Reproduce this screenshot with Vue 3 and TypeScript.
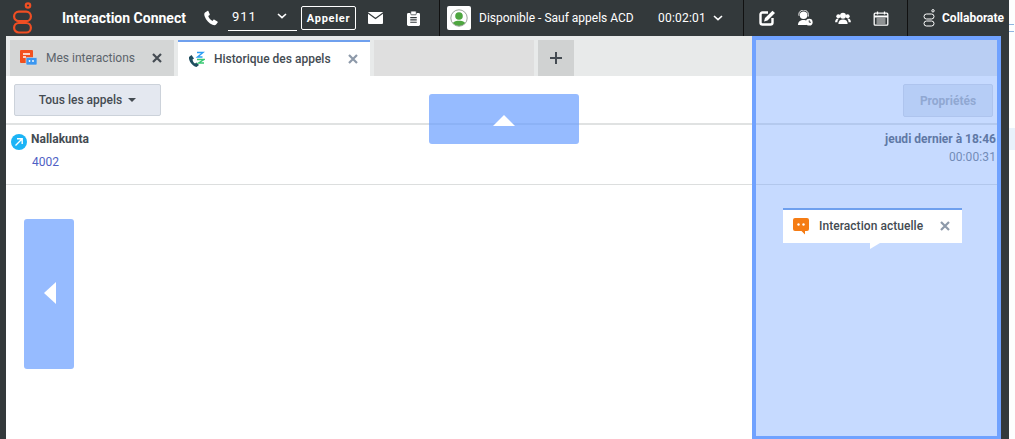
<script setup lang="ts">
const rightIcons = ['edit', 'agent', 'group', 'cal']
</script>

<template>
  <div class="page">
    <div class="shell">
      <header class="topbar">
        <svg class="logo" width="24" height="32" viewBox="0 0 24 32" fill="none" stroke="#f04e23" stroke-width="2.2">
          <circle cx="18" cy="3.500" r="2.200" />
          <rect x="4.100" y="9.600" width="16.800" height="9.500" rx="4.700" />
          <rect x="4.100" y="21" width="16.800" height="9.500" rx="4.700" />
        </svg>
        <span class="brand">Interaction Connect</span>
        <svg class="phone" width="16" height="16" viewBox="0 0 24 24" fill="#fff"><path d="M6.600 1.500 3 3.600C1.600 4.600 1.600 7 2.600 9.600c2 5.400 6.600 10.400 11.600 12.600 2.400 1 4.200.8 5.400-.4l2.400-3c.4-.6.2-1.200-.4-1.600l-4.400-2.600c-.6-.4-1.200-.2-1.600.2l-1.400 1.600c-2.600-1.200-5.400-4.400-6.400-7.400l1.800-1.200c.6-.4.8-1 .5-1.600L8.200 2c-.4-.7-1-.9-1.600-.5z"/></svg>
        <div class="dial">
          <span class="dial-num">911</span>
          <svg width="10" height="6" viewBox="0 0 10 6" fill="none" stroke="#fff" stroke-width="1.600"><path d="M1 1l4 3.600L9 1" /></svg>
        </div>
        <button class="call">Appeler</button>
        <svg class="mail" width="15" height="12" viewBox="0 0 15 12"><rect width="15" height="12" rx="1" fill="#fff"/><path d="M0 1l7.500 5.500L15 1" fill="none" stroke="#33393b" stroke-width="1.100"/></svg>
        <svg class="clip" width="13" height="15" viewBox="0 0 14 16"><rect y="2" width="14" height="14" rx="1.500" fill="#fff"/><rect x="4" y="0" width="6" height="4" rx="1" fill="#fff" stroke="#33393b" stroke-width=".8"/><path d="M3.500 7h7M3.500 9.500h7M3.500 12h7" stroke="#33393b" stroke-width="1.200"/></svg>
        <div class="sep sep-a"></div>
        <div class="status-ico">
          <svg width="24" height="24" viewBox="0 0 24 24">
            <defs><clipPath id="stc"><circle cx="12" cy="12" r="8.200"/></clipPath></defs>
            <g clip-path="url(#stc)">
              <circle cx="12" cy="10" r="3.800" fill="#4ea640"/>
              <path d="M4 22c0-5 3.500-7.200 8-7.200s8 2.200 8 7.200z" fill="#4ea640"/>
            </g>
            <circle cx="12" cy="12" r="8.200" fill="none" stroke="#9aa59a" stroke-width="1"/>
          </svg>
        </div>
        <span class="status-text">Disponible - Sauf appels ACD</span>
        <span class="timer">00:02:01</span>
        <svg class="chev2" width="10" height="6" viewBox="0 0 10 6" fill="none" stroke="#fff" stroke-width="1.600"><path d="M1 1l4 3.600L9 1" /></svg>
        <div class="sep sep-b"></div>
        <div class="tools">
          <template v-for="n in rightIcons" :key="n">
            <svg v-if="n === 'edit'" width="16" height="16" viewBox="0 0 16 16" fill="none"><path d="M9 2.500H3.500a2 2 0 0 0-2 2v8a2 2 0 0 0 2 2h8a2 2 0 0 0 2-2V8" stroke="#fff" stroke-width="2.400"/><path d="M13.500.8 16 3 8.500 10.500 5 11.500l1-3.500z" fill="#fff"/></svg>
            <svg v-else-if="n === 'agent'" width="16" height="16" viewBox="0 0 17 17"><circle cx="7" cy="5.500" r="4" fill="#fff"/><path d="M1 16c0-4 2.500-5.500 6-5.500 1.500 0 2.500.3 3.500 1V16z" fill="#fff"/><path d="M2 6V4.500a5 4.500 0 0 1 10 0V7" fill="none" stroke="#fff" stroke-width="1"/><circle cx="13" cy="13" r="3.600" fill="#fff"/><path d="M13 11v2h1.800" stroke="#33393b" stroke-width="1" fill="none"/></svg>
            <svg v-else-if="n === 'group'" width="16" height="13" viewBox="0 0 17 14" fill="#fff"><circle cx="8.500" cy="4" r="3.200"/><path d="M3.500 13c0-3.500 2-5 5-5s5 1.500 5 5z"/><circle cx="3.500" cy="4.500" r="2.200"/><circle cx="13.500" cy="4.500" r="2.200"/><path d="M0 11c0-2.500 1.200-4 3-4 .4 0 .7 0 1 .2C3 8 2.500 9.500 2.500 11zM17 11c0-2.500-1.200-4-3-4-.4 0-.7 0-1 .2 1 .8 1.500 2.300 1.500 3.800z"/></svg>
            <svg v-else width="16" height="15" viewBox="0 0 15 15" fill="none" stroke="#fff"><rect x=".7" y="2.200" width="13.600" height="12" rx="1" stroke-width="1.300"/><path d="M.7 5.500h13.600" stroke-width="2"/><path d="M4 .5v3M11 .5v3" stroke-width="1.300"/><path d="M3 8h9M3 10h9M3 12h9" stroke-width=".9"/></svg>
          </template>
        </div>
        <div class="sep"></div>
        <svg class="logo-small" width="13" height="18" viewBox="0 0 13 18" fill="none" stroke="#fff" stroke-width="1"><circle cx="10" cy="1.800" r="1.200"/><rect x="1" y="5" width="10" height="5" rx="2.500"/><rect x="1" y="12" width="10" height="5" rx="2.500"/></svg>
        <span class="collab">Collaborate</span>
      </header>

      <main class="main">
        <nav class="tabs">
          <div class="tab tab-off">
            <svg width="17" height="17" viewBox="0 0 17 17"><rect width="13" height="13" rx="1" fill="#f2511f"/><path d="M3 4h7M3 7h3" stroke="#fff" stroke-width="1.500"/><rect x="6" y="7.500" width="11" height="7.500" rx="1" fill="#3b97f0" stroke="#e0e0e0" stroke-width=".6"/><circle cx="9.500" cy="11" r=".9" fill="#fff"/><circle cx="13" cy="11" r=".9" fill="#fff"/></svg>
            <span class="tab-label">Mes interactions</span>
            <svg class="x" width="10" height="10" viewBox="0 0 10 10"><path d="M1 1l8 8M9 1L1 9" stroke="#444b52" stroke-width="2.200"/></svg>
          </div>
          <div class="tab tab-on">
            <svg width="17" height="17" viewBox="0 0 17 17"><path d="M3.500 4 1 6c-.5 3.500 3 9 7.500 10L11 14l-2.500-2.500-1.500 1C5.500 11.500 4.700 10 4.500 8.500L6 7.500z" fill="#1f4e5f"/><path d="M9 1.500h6L9.500 6h5" fill="none" stroke="#2a9df4" stroke-width="1.400"/><path d="M9 8.500h7L10.500 12H16" fill="none" stroke="#37c871" stroke-width="1.400"/></svg>
            <span class="tab-label strong">Historique des appels</span>
            <svg class="x" width="10" height="10" viewBox="0 0 10 10"><path d="M1 1l8 8M9 1L1 9" stroke="#8d99a9" stroke-width="2.200"/></svg>
          </div>
          <div class="tab-fill"></div>
          <div class="tab-add">
            <svg width="12" height="12" viewBox="0 0 12 12"><path d="M6 0v12M0 6h12" stroke="#444b52" stroke-width="2"/></svg>
          </div>
        </nav>

        <div class="toolbar">
          <button class="filter">Tous les appels<i class="caret"></i></button>
          <button class="props">Propriétés</button>
        </div>

        <div class="row">
          <div class="row-left">
            <span class="dir">
              <svg width="10" height="10" viewBox="0 0 10 10" fill="none" stroke="#fff" stroke-width="1.400"><path d="M1.500 8.500 8 2M3 1.800h5.200V7"/></svg>
            </span>
            <div class="who">
              <div class="name">Nallakunta</div>
              <div class="num">4002</div>
            </div>
          </div>
          <div class="row-right">
            <div class="when">jeudi dernier à 18:46</div>
            <div class="dur">00:00:31</div>
          </div>
        </div>
      </main>
    </div>

    <aside class="peek">
      <i class="peek-mark"></i>
      <i class="peek-band"></i>
    </aside>

    <div class="dock dock-top"><i class="tri-up"></i></div>
    <div class="dock dock-left"><i class="tri-left"></i></div>
    <div class="drop-zone">
      <div class="ghost">
        <svg width="16" height="17" viewBox="0 0 16 17"><path d="M2 0h12a2 2 0 0 1 2 2v9a2 2 0 0 1-2 2h-2v3.500L8.500 13H2a2 2 0 0 1-2-2V2a2 2 0 0 1 2-2z" fill="#f57c14"/><circle cx="5.500" cy="6.500" r="1.200" fill="#fff"/><circle cx="10.500" cy="6.500" r="1.200" fill="#fff"/></svg>
        <span class="ghost-label">Interaction actuelle</span>
        <svg class="x" width="10" height="10" viewBox="0 0 10 10"><path d="M1 1l8 8M9 1L1 9" stroke="#8d99a9" stroke-width="2.200"/></svg>
        <i class="ghost-tail"></i>
      </div>
    </div>
  </div>
</template>

<style>
html, body { margin: 0; background: #fdfdfd; overflow: hidden; }
</style>

<style scoped>
.page {
  position: relative;
  display: flex;
  width: 1015px;
  height: 439px;
  overflow: hidden;
  font-family: Roboto, "Liberation Sans", sans-serif;
  background: #fdfefe;
  color: #444b52;
}
.shell {
  width: 1009px;
  flex: none;
  background: #33393b;
  display: flex;
  flex-direction: column;
}
.peek { flex: 1; position: relative; }
.peek-mark {
  position: absolute;
  left: 0;
  top: 24px;
  width: 5px;
  height: 6px;
  border-top: 1px solid #8fb4e0;
  border-bottom: 1px solid #8fb4e0;
}
.peek-band {
  position: absolute;
  left: 0;
  right: 0;
  top: 128px;
  height: 22px;
  background: #e8f1fb;
}
.topbar {
  height: 36px;
  flex: none;
  color: #fff;
  display: flex;
  align-items: center;
  font-size: 12px;
}
.logo { margin-left: 10px; flex: none; }
.brand { margin-left: 28px; width: 141px; font-size: 14px; font-weight: 700; white-space: nowrap; }
.phone { flex: none; }
.dial {
  margin-left: 9px;
  width: 69px;
  height: 26px;
  box-sizing: border-box;
  border-bottom: 1px solid #fff;
  display: flex;
  align-items: center;
  justify-content: space-between;
  padding: 0 10px 3px 4px;
}
.dial-num { font-size: 13px; letter-spacing: 1px; }
.call {
  margin-left: 4px;
  width: 55px;
  height: 24px;
  padding: 0;
  background: transparent;
  color: #fff;
  border: 1px solid #fff;
  border-radius: 2px;
  font: 700 11px Roboto, sans-serif;
  letter-spacing: .7px;
}
.mail { margin-left: 12px; flex: none; }
.clip { margin-left: 24px; flex: none; }
.sep { width: 1px; height: 36px; background: #111; flex: none; }
.sep-a { margin-left: 19px; }
.status-ico {
  margin-left: 7px;
  width: 24px;
  height: 24px;
  border-radius: 2px;
  background: #fff;
  display: flex;
  flex: none;
}
.status-text { margin-left: 8px; width: 179px; white-space: nowrap; }
.timer { width: 55px; letter-spacing: .2px; }
.chev2 { flex: none; }
.sep-b { margin-left: 20px; }
.tools {
  display: flex;
  align-items: center;
  gap: 22px;
  width: 163px;
  box-sizing: border-box;
  padding-left: 15px;
}
.logo-small { margin-left: 15px; flex: none; }
.collab { margin-left: 6px; font-weight: 700; white-space: nowrap; }

.main {
  margin-left: 6px;
  width: 995px;
  flex: 1;
  display: flex;
  flex-direction: column;
  background: #fff;
}
.tabs {
  height: 40px;
  box-sizing: border-box;
  padding: 4px 0 0 4px;
  background: #e8eaea;
  display: flex;
  gap: 4px;
}
.tab {
  height: 36px;
  box-sizing: border-box;
  display: flex;
  align-items: center;
  font-size: 12px;
  white-space: nowrap;
}
.tab-off { width: 164px; background: #d4d6d6; padding-left: 10px; }
.tab-on { width: 192px; background: #fff; border-top: 2px solid #6fa0ee; padding-left: 10px; }
.tab-label { margin-left: 9px; flex: 1; }
.tab-off .tab-label { color: #5c646c; }
.strong { font-weight: 500; color: #444b52; }
.x { margin-right: 12px; flex: none; }
.tab-fill { width: 160px; height: 36px; background: #dfdfdf; }
.tab-add {
  width: 36px;
  height: 36px;
  background: #d0d2d2;
  display: flex;
  align-items: center;
  justify-content: center;
}

.toolbar {
  height: 49px;
  box-sizing: border-box;
  border-bottom: 2px solid #e0e2e2;
  padding: 8px 8px 0 8px;
  display: flex;
  justify-content: space-between;
  align-items: flex-start;
}
.filter {
  width: 147px;
  height: 32px;
  box-sizing: border-box;
  padding: 0;
  background: #e4e8f0;
  border: 1px solid #ccd2da;
  border-radius: 2px;
  font: 500 12px Roboto, sans-serif;
  color: #444b52;
}
.caret {
  display: inline-block;
  margin-left: 6px;
  vertical-align: 2px;
  border-left: 4px solid transparent;
  border-right: 4px solid transparent;
  border-top: 4px solid #444b52;
}
.props {
  width: 90px;
  height: 33px;
  box-sizing: border-box;
  padding: 0;
  background: #e4e8f0;
  border: 1px solid #d6dae2;
  border-radius: 2px;
  font: 700 12px Roboto, sans-serif;
  color: #a3a9b1;
}
.row {
  height: 60px;
  box-sizing: border-box;
  border-bottom: 1px solid #dcdede;
  display: flex;
  justify-content: space-between;
}
.row-left { display: flex; padding: 8px 0 0 5px; }
.dir {
  width: 16px;
  height: 16px;
  margin-top: 1px;
  border-radius: 50%;
  background: #1cb4f6;
  display: flex;
  align-items: center;
  justify-content: center;
  flex: none;
}
.who { margin-left: 4px; }
.name { font-size: 12px; font-weight: 700; line-height: 12px; color: #444b52; }
.num { margin-top: 10px; margin-left: 1px; font-size: 12px; line-height: 14px; color: #4f5fc4; }
.row-right { text-align: right; padding: 7px 5px 0 0; }
.when { font-size: 12px; font-weight: 700; line-height: 14px; color: #4e5664; }
.dur { margin-top: 4px; font-size: 12px; line-height: 14px; color: #6f7884; letter-spacing: .1px; }

.dock {
  position: absolute;
  background: rgba(100, 155, 255, .68);
  border-radius: 3px;
  display: flex;
  align-items: center;
  justify-content: center;
}
.dock-top { left: 429px; top: 94px; width: 150px; height: 50px; }
.dock-left { left: 24px; top: 219px; width: 50px; height: 150px; }
.tri-up {
  width: 0; height: 0;
  margin-top: 2px;
  border-left: 11px solid transparent;
  border-right: 11px solid transparent;
  border-bottom: 11px solid #fff;
}
.tri-left {
  width: 0; height: 0;
  margin: -2px 0 0 1px;
  border-top: 11px solid transparent;
  border-bottom: 11px solid transparent;
  border-right: 12px solid #fff;
}
.drop-zone {
  position: absolute;
  left: 752px;
  top: 36px;
  width: 249px;
  height: 403px;
  box-sizing: border-box;
  border: 4px solid #70a2ff;
  border-bottom-width: 3px;
  background: rgba(120, 168, 255, .42);
}
.ghost {
  position: absolute;
  left: 27px;
  top: 168px;
  width: 179px;
  height: 35px;
  box-sizing: border-box;
  background: #fff;
  border-top: 2px solid #6fa0ee;
  display: flex;
  align-items: center;
  padding-left: 10px;
}
.ghost-label { margin: -2px 0 0 10px; flex: 1; font-size: 12px; font-weight: 500; white-space: nowrap; letter-spacing: .05px; color: #444b52; }
.ghost .x { margin-top: -2px; }
.ghost-tail {
  position: absolute;
  left: 87px;
  top: 33px;
  width: 0; height: 0;
  border-top: 6px solid #fff;
  border-right: 10px solid transparent;
}
</style>
